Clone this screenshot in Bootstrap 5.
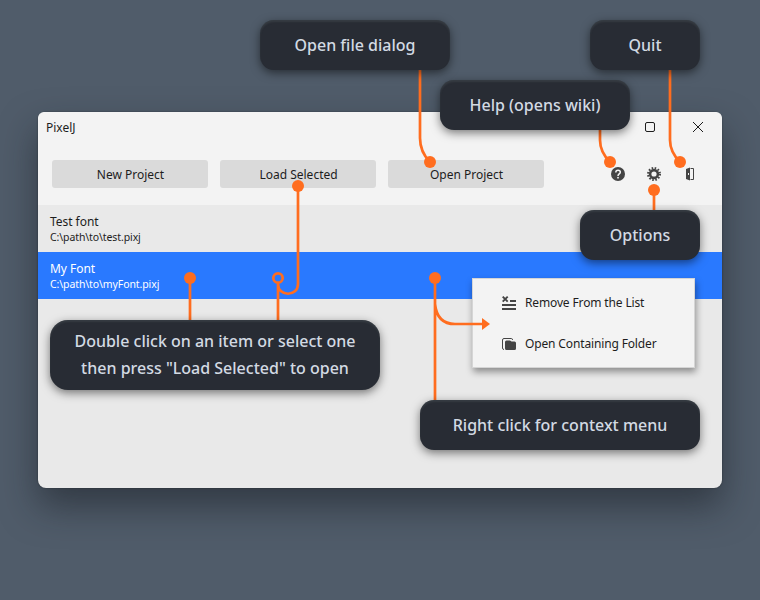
<!DOCTYPE html>
<html lang="en">
<head>
<meta charset="utf-8">
<meta name="viewport" content="width=device-width, initial-scale=1">
<title>PixelJ</title>
<link href="https://cdn.jsdelivr.net/npm/bootstrap@5.3.0/dist/css/bootstrap.min.css" rel="stylesheet">
<style>
body{background:#505c6a;font-family:"Noto Sans","Open Sans",sans-serif;height:600px;overflow:hidden}
.stage{width:760px;height:600px;padding:112px 38px 0}
.app-window{height:376px;background:#e9e9e9;border-radius:8px;box-shadow:0 18px 36px rgba(20,24,30,.5),0 0 2px rgba(0,0,0,.4);font-size:12px;color:#1d1d1d;line-height:16px}
.titlebar{height:30px;background:#f3f3f3;padding:0 18px 0 8px;gap:36px}
.titlebar span{padding-top:2px}
.toolbar{height:63px;background:#f3f3f3;padding:18px 24px 0 14px;gap:12px}
.tool-btn{--bs-btn-font-size:12px;--bs-btn-line-height:16px;width:156px;height:28px;background:#dadada;border:0;border-radius:3px;color:#1d1d1d}
.tool-btn span{display:block;padding:2px 0 0 1px}
.tool-icons{gap:20px;height:28px}
.file-row{height:47px;background:#e9e9e9;color:#1d1d1d;padding:9px 12px 0;border:0}
.file-row.picked{background:#2979ff;color:#fff}
.file-row>div:first-child{letter-spacing:-.04px}
.file-path{font-size:10.5px;line-height:15px;letter-spacing:-.1px}
.ctx-menu{left:472px;top:278px;width:223px;height:90px;background:#f3f3f3;border:1px solid #d5d5d5;padding:3px 0;box-shadow:1px 4px 7px rgba(0,0,0,.4);font-size:12px;line-height:16px;color:#1d1d1d;letter-spacing:-.14px}
.ctx-item{height:41px;padding-left:28px;gap:8px}
.note{background:#282c34;color:#d3dae3;border-radius:14px;font-size:16px;font-weight:500;line-height:27px;box-shadow:0 3px 10px rgba(0,0,0,.5),inset 0 2px 2px rgba(85,95,100,.3);height:50px}
.note-file{left:260px;top:20px;width:190px}
.note-quit{left:590px;top:20px;width:110px}
.note-help{left:440px;top:80px;width:190px}
.note-options{left:580px;top:210px;width:120px}
.note-load{left:50px;top:320px;width:330px;height:70px;border-radius:18px}
.note-menu{left:420px;top:400px;width:280px}
svg{display:block;flex:none}
</style>
</head>
<body>
<main class="stage position-relative">
  <section class="app-window">
    <header class="titlebar d-flex align-items-center rounded-top-2">
      <span class="me-auto">PixelJ</span>
      <svg width="12" height="12" viewBox="0 0 12 12" fill="none" stroke="#1d1d1d"><rect x="1.5" y="1.5" width="9" height="9" rx="1.5"/></svg>
      <svg width="12" height="12" viewBox="0 0 12 12" fill="none" stroke="#1d1d1d" stroke-width="1"><path d="M1 1l10 10M11 1L1 11"/></svg>
    </header>
    <div class="toolbar d-flex align-items-start">
      <button class="btn tool-btn p-0"><span>New Project</span></button>
      <button class="btn tool-btn p-0"><span>Load Selected</span></button>
      <button class="btn tool-btn p-0"><span>Open Project</span></button>
      <div class="tool-icons d-flex align-items-center ms-auto">
        <svg width="16" height="16" viewBox="0 0 16 16"><circle cx="8" cy="8" r="7" fill="#444"/><path d="M5.800 6.400c0-3 4.500-2.800 4.500-.2C10.300 8 8 7.900 8 9.900" fill="none" stroke="#f3f3f3" stroke-width="1.500"/><rect x="7.200" y="10.900" width="1.600" height="1.600" fill="#f3f3f3"/></svg>
        <svg width="16" height="16" viewBox="0 0 16 16" fill="none" stroke="#444"><circle cx="8" cy="8" r="3.900" stroke-width="2.600"/><circle cx="8" cy="8" r="6" stroke-width="2" stroke-dasharray="1.570 1.571"/></svg>
        <svg width="16" height="16" viewBox="0 0 16 16"><path d="M8.500 2.500h3v11h-3" fill="none" stroke="#444"/><path fill="#444" fill-rule="evenodd" d="M4 3l4-1.500v13L4 13zM6 7v2h1V7z"/></svg>
      </div>
    </div>
    <div class="list-group list-group-flush">
      <div class="list-group-item file-row"><div>Test font</div><div class="file-path">C:\path\to\test.pixj</div></div>
      <div class="list-group-item file-row picked"><div>My Font</div><div class="file-path">C:\path\to\myFont.pixj</div></div>
    </div>
  </section>

  <div class="ctx-menu position-absolute">
    <div class="ctx-item d-flex align-items-center">
      <svg width="16" height="16" viewBox="0 0 16 16" fill="none" stroke="#444"><path d="M1.700 1.700l5 5M6.700 1.700l-5 5" stroke-width="1.900"/><path d="M9 6h6M1 10h14M1 14h14" stroke-width="1.800"/></svg>
      <span>Remove From the List</span>
    </div>
    <div class="ctx-item d-flex align-items-center">
      <svg width="16" height="16" viewBox="0 0 16 16"><path d="M3 13.500Q1.500 13.500 1.500 12V4Q1.500 2.500 3 2.500H10.500Q11.500 2.500 11.500 4" fill="none" stroke="#444"/><path d="M5.500 4.500H9l1.500 1H13.500Q15 5.500 15 7V12.500Q15 14 13.500 14H5.500Q4 14 4 12.500V6Q4 4.500 5.500 4.500z" fill="#444"/></svg>
      <span>Open Containing Folder</span>
    </div>
  </div>

  <svg class="position-absolute top-0 start-0" width="760" height="600" viewBox="0 0 760 600" fill="none" stroke="#ff6d1f" stroke-width="2.700">
    <path d="M420 60V138Q420 152 430 162M600 120V140Q600 152 610 162M670 60V140Q670 152 680 162M654 190V215M190 278V325M278 283V325M298 186V284C298 297 278 297 278 284M435 278V405M435 304Q437 324 455 324H483"/>
    <circle cx="278" cy="278" r="4.700"/>
    <g fill="#ff6d1f" stroke="none"><circle cx="430" cy="162" r="6"/><circle cx="610" cy="162" r="6"/><circle cx="680" cy="162" r="6"/><circle cx="654" cy="190" r="6"/><circle cx="298" cy="186" r="6"/><circle cx="190" cy="278" r="6"/><circle cx="435" cy="278" r="6"/><path d="M482 318l8 6-8 6z"/></g>
  </svg>

  <div class="note note-file position-absolute d-flex align-items-center justify-content-center">Open file dialog</div>
  <div class="note note-quit position-absolute d-flex align-items-center justify-content-center">Quit</div>
  <div class="note note-help position-absolute d-flex align-items-center justify-content-center">Help (opens wiki)</div>
  <div class="note note-options position-absolute d-flex align-items-center justify-content-center">Options</div>
  <div class="note note-load position-absolute d-flex align-items-center justify-content-center text-center">Double click on an item or select one<br>then press "Load Selected" to open</div>
  <div class="note note-menu position-absolute d-flex align-items-center justify-content-center">Right click for context menu</div>
</main>
<script src="https://cdn.jsdelivr.net/npm/bootstrap@5.3.0/dist/js/bootstrap.bundle.min.js"></script>
</body>
</html>
